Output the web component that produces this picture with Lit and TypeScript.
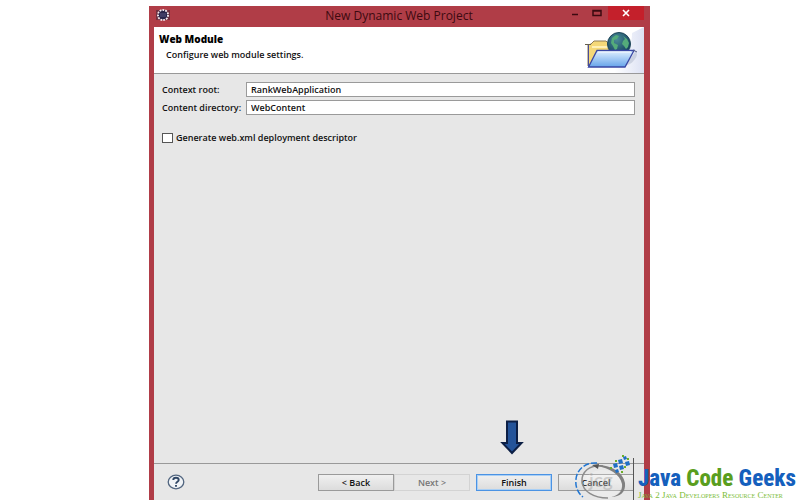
import { LitElement, html, css } from "lit";
import { customElement, state } from "lit/decorators.js";

@customElement("jcg-watermark")
class JcgWatermark extends LitElement {
  static styles = css`
    :host {
      display: flex;
      align-items: flex-end;
      pointer-events: none;
    }
    .mark {
      display: block;
      width: 66px;
      height: 46px;
    }
    .words {
      display: flex;
      flex-direction: column;
      width: 162px;
      white-space: nowrap;
    }
    .name {
      font: 800 23px/24px "Liberation Sans Narrow", "Roboto Condensed", "Liberation Sans", sans-serif;
      color: #1560bd;
    }
    .code {
      color: #5a9e1e;
    }
    .tag {
      font: 9px/8px "Liberation Serif", serif;
      font-variant: small-caps;
      color: #7cbd38;
      margin-bottom: 1px;
    }
  `;

  render() {
    return html`
      <svg class="mark" viewBox="0 0 66 46" aria-hidden="true">
        <ellipse cx="31" cy="30" rx="19" ry="14" fill="#fff" opacity=".2" />
        <text x="17" y="33" font-family="Lato, sans-serif" font-size="19" fill="#999" opacity=".4">jcg</text>
        <path d="M25 9C14 8 5 15 4 25c-1 8 2 14 7 18" fill="none" stroke="#2176d2" stroke-width="1.500" stroke-dasharray="6 2" />
        <path d="M31 12C18 10 9 18 10 28c1 9 11 16 26 16" fill="none" stroke="#8c8c8c" stroke-width="1.500" />
        <path d="M25 11c14 0 26 7 28 18 1 9-5 14-14 14 7-1 12-6 11-13-2-10-13-16-25-18z" fill="#808080" />
        <path d="M27 10l-7 1 6 4z" fill="#555" />
        <g fill="#1f6fc6">
          <path d="M46 6l4-1 1 4-4 1zM41 10l4-1 1 4-4 1zM47 12l4-1 1 4-4 1zM53 8l4-1 1 4-4 1zM51 3l3-1 1 3-3 1zM43 16l3-1 1 3-3 1z" />
        </g>
        <g fill="#6caf28">
          <path d="M43 6h2v2h-2zM50 1h2v2h-2zM55 4h2v2h-2zM52 12h2v2h-2zM38 13h2v2h-2zM49 17h2v2h-2z" />
        </g>
        <path d="M61.500 4v42" stroke="#555" stroke-width="1" />
      </svg>
      <div class="words">
        <span class="name">Java <span class="code">Code</span> Geeks</span>
        <span class="tag">Java 2 Java Developers Resource Center</span>
      </div>
    `;
  }
}

@customElement("app-root")
class AppRoot extends LitElement {
  static styles = css`
    :host {
      display: block;
      position: relative;
      min-height: 100vh;
      overflow: hidden;
      box-sizing: border-box;
      padding: 6px 1px 0 0;
      background: #fff;
      color: #111;
      font: 600 9px/12px "Open Sans", "Noto Sans", sans-serif;
    }
    * {
      box-sizing: border-box;
    }
    .window {
      display: flex;
      flex-direction: column;
      width: 100%;
      max-width: 501px;
      min-height: calc(100vh - 6px);
      margin: 0 auto;
      padding: 0 6px 0 5px;
      background: #b03d47;
    }
    .titlebar {
      display: grid;
      grid-template-columns: 80px 1fr 80px;
      height: 21px;
    }
    .app-icon {
      width: 16px;
      height: 14px;
      margin: 2px 0 0 1px;
    }
    .title {
      margin: 0;
      font: 500 12px/20px "Open Sans", "Noto Sans", sans-serif;
      text-align: center;
      color: #3c0a10;
      white-space: nowrap;
    }
    .controls {
      display: flex;
      justify-content: flex-end;
      align-items: flex-start;
    }
    .control {
      display: block;
      width: 23px;
      height: 14px;
      padding: 0;
      border: 0;
      background: none;
    }
    .control.close {
      width: 37px;
      background: #c4202b;
    }
    .control svg {
      display: block;
      margin: 0 auto;
    }
    .header {
      display: flex;
      justify-content: space-between;
      height: 47px;
      background: #fff;
      border-bottom: 1px solid #999;
    }
    .heading {
      margin: 0;
      padding: 6px 0 0 5px;
      font: 800 10px/12px "Open Sans", "Noto Sans", sans-serif;
      color: #000;
    }
    .subtitle {
      margin: 0;
      padding: 4px 0 0 12px;
    }
    .banner {
      display: block;
      width: 64px;
      height: 46px;
    }
    .body {
      flex: 1;
      padding: 8px 9px 0 8px;
      background: #e7e7e7;
    }
    .fields {
      display: grid;
      grid-template-columns: 80px 1fr;
      gap: 3px 4px;
      align-items: center;
    }
    .fields label {
      white-space: nowrap;
    }
    .fields input {
      width: 100%;
      height: 15px;
      padding: 0 4px;
      border: 1px solid #9a9a9a;
      border-radius: 0;
      background: #fff;
      font: inherit;
      color: inherit;
      outline: 0;
    }
    .option {
      display: flex;
      align-items: center;
      gap: 3px;
      margin-top: 17px;
    }
    .option input {
      appearance: none;
      width: 11px;
      height: 10px;
      margin: 0;
      border: 1px solid #555;
      background: #fff;
    }
    .option input:checked {
      background: #555;
    }
    .footer {
      display: flex;
      align-items: flex-start;
      height: 37px;
      padding: 10px 10px 0 13px;
      border-top: 1px solid #999;
      background: #e7e7e7;
    }
    .help {
      width: 18px;
      height: 16px;
      padding: 0;
      margin-right: auto;
      border: 0;
      background: none;
    }
    .help svg {
      display: block;
    }
    .buttons {
      display: flex;
      gap: 6px;
    }
    .pair {
      display: flex;
    }
    .action {
      display: block;
      width: 76px;
      height: 17px;
      padding: 0;
      border: 1px solid #9a9a9a;
      background: linear-gradient(#f0f0f0, #dcdcdc);
      font: inherit;
      color: #111;
    }
    .action:disabled {
      border-color: #d3d3d3;
      background: #e7e7e7;
      color: #777;
    }
    .action.primary {
      border: 1px solid #4b93e4;
      box-shadow: inset 0 0 0 1px #a9cff5;
    }
    .target {
      position: relative;
    }
    .pointer {
      position: absolute;
      bottom: 36px;
      left: 24px;
    }
    .watermark {
      position: absolute;
      right: 0;
      bottom: 0;
    }
  `;

  @state() private contextRoot = "RankWebApplication";
  @state() private contentDirectory = "WebContent";

  render() {
    return html`
      <main class="window">
        <div class="titlebar">
          <svg class="app-icon" viewBox="0 0 16 14" aria-hidden="true">
            <path d="M1 2h14v10H1z" fill="#71303f" />
            <circle cx="8" cy="7" r="5" fill="#2a2547" stroke="#f0e8ee" stroke-width="2" stroke-dasharray="1.8 1" />
            <circle cx="8" cy="7" r="4" fill="#28264b" />
            <path d="M5 6h6M5 8h6" stroke="#565481" />
          </svg>
          <h1 class="title">New Dynamic Web Project</h1>
          <div class="controls">
            <button class="control" aria-label="Minimize">
              <svg width="8" height="14" viewBox="0 0 8 14"><path d="M1 8.5h6" stroke="#3c0a10" stroke-width="1.5" /></svg>
            </button>
            <button class="control" aria-label="Maximize">
              <svg width="10" height="14" viewBox="0 0 10 14"><path d="M1 4.500h8v5H1zM1 5h8" fill="none" stroke="#3c0a10" stroke-width="1.5" /></svg>
            </button>
            <button class="control close" aria-label="Close">
              <svg width="10" height="14" viewBox="0 0 10 14"><path d="M2 4l6 6M8 4l-6 6" stroke="#fff" stroke-width="1.6" /></svg>
            </button>
          </div>
        </div>
        <header class="header">
          <div>
            <h2 class="heading">Web Module</h2>
            <p class="subtitle">Configure web module settings.</p>
          </div>
          <svg class="banner" viewBox="0 0 64 46" aria-hidden="true">
            <defs>
              <linearGradient id="glow" x1="0" y1="0" x2="1" y2="0">
                <stop offset=".3" stop-color="#fff" />
                <stop offset="1" stop-color="#dce1f3" />
              </linearGradient>
              <linearGradient id="folder" x1="0" y1="0" x2="0" y2="1">
                <stop offset="0" stop-color="#e2f1ff" />
                <stop offset="1" stop-color="#66a4ea" />
              </linearGradient>
              <radialGradient id="globe" cx=".4" cy=".3" r=".7">
                <stop offset="0" stop-color="#4b8c98" />
                <stop offset="1" stop-color="#123f5c" />
              </radialGradient>
            </defs>
            <path d="M64 0v46H22C45 42 52 20 52 6z" fill="url(#glow)" />
            <path d="M44 39l12-15 1 4c-2 6-7 10-13 11z" fill="#b8bfd2" opacity=".6" />
            <path d="M8 39V18l3-1 3-3h12l2 2h9v10L12 38z" fill="#f5d878" stroke="#8d7a55" />
            <path d="M8.500 39V18" stroke="#4a4d9a" />
            <path d="M5 17.500h6" stroke="#66604e" />
            <path d="M12 20h16" stroke="#fff0b6" stroke-width="2" />
            <circle cx="39" cy="17" r="11.500" fill="url(#globe)" stroke="#1e4558" />
            <path d="M32 11l4-3 3 1-2 3-3 1v3l4 2-1 4-2 1-2-4-2-3zM43 9l4 3 2 4-1 4-2 2-2-3-2-2 1-3 2-2z" fill="#54ab7a" />
            <path d="M17 23.500h37l-9 16.500H8.500z" fill="url(#folder)" stroke="#3947a4" stroke-width="1.300" />
            <path d="M18 25h33" stroke="#f7fbff" />
            <path d="M53 23l4 2" stroke="#525b85" />
          </svg>
        </header>
        <section class="body">
          <div class="fields">
            <label for="context-root">Context root:</label>
            <input id="context-root" type="text" .value=${this.contextRoot} />
            <label for="content-dir">Content directory:</label>
            <input id="content-dir" type="text" .value=${this.contentDirectory} />
          </div>
          <div class="option">
            <input id="descriptor" type="checkbox" />
            <label for="descriptor">Generate web.xml deployment descriptor</label>
          </div>
        </section>
        <footer class="footer">
          <button class="help" aria-label="Help">
            <svg width="18" height="16" viewBox="0 0 18 16">
              <ellipse cx="9" cy="8" rx="7.800" ry="6.800" fill="#f0f3f6" stroke="#51657f" stroke-width="1.300" />
              <path d="M6.300 6c0-3 5.400-3 5.400 0 0 1.800-2.600 1.700-2.600 3.700M9 11v1.800" fill="none" stroke="#2f4665" stroke-width="1.900" />
            </svg>
          </button>
          <div class="buttons">
            <div class="pair">
              <button class="action">&lt; Back</button>
              <button class="action" disabled>Next &gt;</button>
            </div>
            <div class="target">
              <svg class="pointer" width="24" height="35" viewBox="0 0 24 35" aria-hidden="true">
                <path d="M7 1.500h10V23h4.500L12 33 2.500 23H7z" fill="#24549a" stroke="#0c1f45" stroke-width="2" />
              </svg>
              <button class="action primary">Finish</button>
            </div>
            <button class="action">Cancel</button>
          </div>
        </footer>
      </main>
      <jcg-watermark class="watermark"></jcg-watermark>
    `;
  }
}
